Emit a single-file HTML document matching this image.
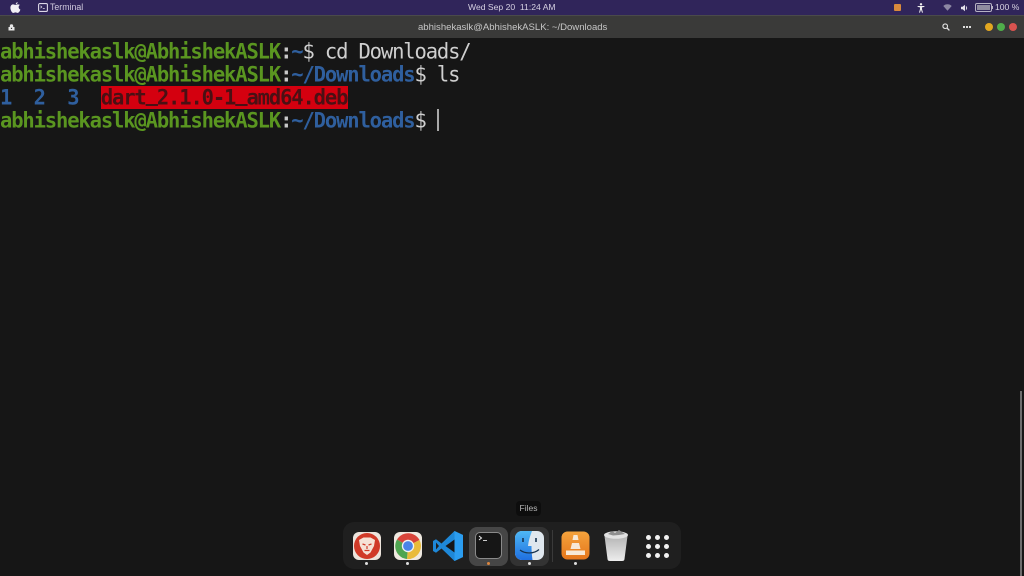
<!DOCTYPE html>
<html><head><meta charset="utf-8">
<style>
html,body{margin:0;padding:0;background:#161616;width:1024px;height:576px;overflow:hidden}
.a{position:absolute}
#top{left:0;top:0;width:1024px;height:15px;background:#30255a}
#bar{left:0;top:15px;width:1024px;height:23px;background:#3a3a39;border-top:1px solid #4a4a4a;box-sizing:border-box}
#term{left:0;top:38px;width:1024px;height:538px;background:#161616}
.t{font-family:"Liberation Sans",sans-serif;white-space:nowrap}
.l{position:absolute;left:0;font-family:"DejaVu Sans Mono",monospace;font-size:20.5px;letter-spacing:-1.14px;line-height:23px;height:23px;white-space:pre;color:#cfcfcf;transform-origin:0 50%;transform:scaleY(1.06);filter:blur(.35px)}
.g{color:#5a9620;font-weight:bold}
.b{color:#2f5f9e;font-weight:bold}
.w{color:#c9c9c9;font-weight:bold}
.u{display:inline-block;transform:translateY(-3px)}
</style></head>
<body>
<div class="a" id="top"></div>
<div class="a" id="bar"></div>
<div class="a" id="term"></div>

<svg class="a" style="left:9px;top:1px" width="13" height="13" viewBox="0 0 12 12"><path d="M8 1C7 1.200 6.200 2 6.200 3 7.200 3 8 2.100 8 1zM6 3.600C5.200 3.600 4.700 3.100 3.800 3.100 2.500 3.100 1.300 4.300 1.300 6.300c0 2.200 1.500 4.700 2.700 4.700.8 0 1.100-.5 2-.5s1.200.5 2 .5c1 0 2-1.500 2.500-3-1.200-.5-1.600-1.500-1.600-2.300 0-1 .5-1.600 1.300-2.100C9.600 3.400 8.700 3.100 8 3.100 7.200 3.100 6.600 3.600 6 3.600z" fill="#f2f0f5"/></svg>
<svg class="a" style="left:38px;top:3px" width="10" height="9" viewBox="0 0 10 9"><rect x=".6" y=".6" width="8.800" height="7.800" rx="1.200" fill="none" stroke="#dcd8e6" stroke-width="1.100"/><path d="M2.500 2.800l1.300 1.200-1.300 1.200M4.800 5.500h2" stroke="#dcd8e6" stroke-width=".8" fill="none"/></svg>
<div class="a t" style="left:50px;top:2px;font-size:8.800px;line-height:11px;color:#cfc9dc">Terminal</div>
<div class="a t" style="left:468px;top:2px;font-size:8.600px;line-height:11px;color:#d6d1e2">Wed Sep 20&nbsp; 11:24 AM</div>

<div class="a" style="left:894px;top:4px;width:7px;height:7px;background:#d98a3c;border-radius:1px"></div>
<svg class="a" style="left:917px;top:3px" width="8" height="10" viewBox="0 0 8 10"><circle cx="4" cy="1.300" r="1.200" fill="#eee"/><path d="M.6 3h6.800v.9L5 4.400V6l1 3.600H5L4 6.800 3 9.600H2L3 6V4.400L.6 3.900z" fill="#eee"/></svg>
<svg class="a" style="left:943px;top:4px" width="9" height="7" viewBox="0 0 9 7"><path d="M.3 2a6 6 0 0 1 8.400 0L4.500 6.800z" fill="#8d88a3"/></svg>
<svg class="a" style="left:961px;top:4px" width="8" height="8" viewBox="0 0 8 8"><path d="M0 2.800h1.600L4 .8v6.400L1.600 5.200H0z" fill="#e6e3ec"/><path d="M5 2.500a2 2 0 0 1 0 3" stroke="#e6e3ec" stroke-width=".9" fill="none"/></svg>
<div class="a" style="left:975px;top:3px;width:15px;height:7px;border:1px solid #b6b2c4;border-radius:2px;padding:0"><div style="margin:1px;height:5px;background:#8f8ba0"></div></div>
<div class="a" style="left:992px;top:6px;width:1px;height:3px;background:#b6b2c4"></div>
<div class="a t" style="left:995px;top:2px;font-size:8.600px;line-height:11px;color:#d8d4e2">100 %</div>

<svg class="a" style="left:8px;top:24px" width="7" height="7" viewBox="0 0 7 7"><path d="M1.800 3V2a1.700 1.700 0 0 1 3.400 0v1H6.500V6.500H.5V3z" fill="#e8e8e8"/><rect x="2.900" y="3.800" width="1.200" height="1.200" fill="#3a3a39"/></svg>
<div class="a t" style="left:418px;top:21px;font-size:9.550px;line-height:13px;color:#c6c6c6">abhishekaslk@AbhishekASLK: ~/Downloads</div>
<svg class="a" style="left:942px;top:23px" width="8" height="8" viewBox="0 0 8 8"><circle cx="3.200" cy="3.200" r="2.300" fill="none" stroke="#e0e0e0" stroke-width="1.100"/><path d="M5 5l2.400 2.400" stroke="#e0e0e0" stroke-width="1.300"/></svg>
<div class="a" style="left:963px;top:26px;width:2px;height:2px;background:#ddd;box-shadow:3px 0 #ddd,6px 0 #ddd"></div>
<div class="a" style="left:985px;top:23px;width:8px;height:8px;border-radius:50%;background:#e2a720"></div>
<div class="a" style="left:997px;top:23px;width:8px;height:8px;border-radius:50%;background:#4fae4a"></div>
<div class="a" style="left:1009px;top:23px;width:8px;height:8px;border-radius:50%;background:#d9534f"></div>

<div class="l" style="top:40px"><span class="g">abhishekaslk@AbhishekASLK</span><span class="w">:</span><span class="b">~</span>$ cd Downloads/</div>
<div class="l" style="top:63px"><span class="g">abhishekaslk@AbhishekASLK</span><span class="w">:</span><span class="b">~/Downloads</span>$ ls</div>
<div class="a" style="left:101px;top:86px;width:247px;height:23px;background:#d4000f"></div>
<div class="l" style="top:86px"><span class="b">1</span>  <span class="b">2</span>  <span class="b">3</span>  <span style="color:#4a1014;font-weight:bold">dart<span class="u">_</span>2.1.0-1<span class="u">_</span>amd64.deb</span></div>
<div class="l" style="top:109px"><span class="g">abhishekaslk@AbhishekASLK</span><span class="w">:</span><span class="b">~/Downloads</span>$ </div>
<div class="a" style="left:437px;top:109px;width:2px;height:22px;background:#a8a8a8"></div>

<div class="a" style="left:1020px;top:391px;width:2px;height:185px;background:#6e6e6e"></div>

<div class="a t" style="left:516px;top:501px;width:25px;height:15px;background:#0d0d0d;border-radius:4px;font-size:8.500px;line-height:15px;text-align:center;color:#b5b5b5">Files</div>

<div class="a" style="left:343px;top:522px;width:338px;height:47px;background:#1f1f1f;border-radius:11px"></div>
<div class="a" style="left:469px;top:527px;width:39px;height:39px;background:#464646;border-radius:8px"></div>
<div class="a" style="left:510px;top:527px;width:39px;height:39px;background:#333;border-radius:8px"></div>
<div class="a" style="left:552px;top:530px;width:1px;height:32px;background:#3a3a3a"></div>

<svg class="a" style="left:351px;top:530px" width="32" height="32" viewBox="0 0 32 32">
<rect x="2" y="2" width="28" height="28" rx="6" fill="#ece4dc"/>
<circle cx="16" cy="16" r="13" fill="#d03a28"/>
<path d="M8 10l4.500-2.500h7L24 10l-1 6-3.500 6.500L16 25l-3.500-2.500L9 16z" fill="#f5e2d6"/>
<path d="M11.500 14l3 1M20.500 14l-3 1M16 16v3M13.500 20.500h5" stroke="#d03a28" stroke-width="1.200" fill="none"/>
</svg>
<svg class="a" style="left:392px;top:530px" width="32" height="32" viewBox="0 0 32 32">
<rect x="2" y="2" width="28" height="28" rx="6" fill="#efe9e0"/>
<path d="M16 16L5 9.500A13 13 0 0 1 27.500 10z" fill="#d8443a"/>
<path d="M16 16L27.500 10A13 13 0 0 1 15 29z" fill="#e9bb3a"/>
<path d="M16 16L15 29A13 13 0 0 1 5 9.500z" fill="#4fa550"/>
<circle cx="16" cy="16" r="6.200" fill="#f2f2f2"/>
<circle cx="16" cy="16" r="4.900" fill="#4a84e8"/>
</svg>
<svg class="a" style="left:432px;top:530px" width="32" height="32" viewBox="0 0 32 32">
<path d="M22.500 1L9.500 13.500 4 9.300 1 11v10l3 1.700 5.500-4.200L22.500 31 31 27V5z" fill="#1e88d8"/>
<path d="M22.500 1L31 5v22l-8.500 4z" fill="#2b9df0"/>
<path d="M22.500 9.500L13.500 16l9 6.500z" fill="#161616"/>
<path d="M4 12.500L7 16l-3 3.500z" fill="#1f1f1f"/>
</svg>
<div class="a" style="left:475px;top:532px;width:25px;height:25px;background:#161616;border:1.500px solid #8a8a8a;border-radius:5px;box-sizing:content-box"></div>
<svg class="a" style="left:478px;top:535px" width="14" height="8" viewBox="0 0 14 8"><path d="M1 1l2.500 2L1 5" stroke="#eee" stroke-width="1" fill="none"/><path d="M5 5.500h4" stroke="#ccc" stroke-width="1"/></svg>
<svg class="a" style="left:514px;top:530px" width="31" height="31" viewBox="0 0 31 31">
<defs><linearGradient id="f" x1="0" y1="0" x2="0" y2="1"><stop offset="0" stop-color="#4fb8f5"/><stop offset="1" stop-color="#1f6fe0"/></linearGradient></defs>
<rect x="1" y="1" width="29" height="29" rx="7" fill="#dfe7ee"/>
<path d="M8 1h10c-2 5-3.500 10-4 15h3.500c0 4 .3 9 1 14H8a7 7 0 0 1-7-7V8a7 7 0 0 1 7-7z" fill="url(#f)"/>
<path d="M9 8v4M22 8v4" stroke="#16324f" stroke-width="1.600"/>
<path d="M6 20c5 4 14 4 19-.5" stroke="#16324f" stroke-width="1.200" fill="none"/>
</svg>
<svg class="a" style="left:560px;top:530px" width="31" height="31" viewBox="0 0 31 31">
<defs><linearGradient id="o" x1="0" y1="0" x2="0" y2="1"><stop offset="0" stop-color="#f5a33c"/><stop offset="1" stop-color="#e5761c"/></linearGradient></defs>
<rect x="1.500" y="1.500" width="28" height="28" rx="6" fill="url(#o)"/>
<path d="M13.500 5h4l1 5h-6zM12 13h7l1.500 6h-10z" fill="#f7e8d6"/>
<path d="M6 20.500h19v4.500H6z" fill="#f7e8d6"/>
</svg>
<svg class="a" style="left:602px;top:529px" width="28" height="33" viewBox="0 0 28 33">
<defs><linearGradient id="c" x1="0" y1="0" x2="0" y2="1"><stop offset="0" stop-color="#b5b5b5"/><stop offset="1" stop-color="#ededed"/></linearGradient></defs>
<path d="M2.500 7h23l-3 23c-.2 1.500-1 2-2.500 2H8c-1.500 0-2.300-.5-2.500-2z" fill="url(#c)"/>
<ellipse cx="14" cy="6" rx="12" ry="3.800" fill="#e2e2e2"/>
<path d="M6 5l4-3 3 2 4-3 3 2 3 2-6 1-6 .5z" fill="#8f8f8f"/>
</svg>
<div class="a" style="left:646px;top:535px;width:5px;height:5px;border-radius:50%;background:#f2f2f2;box-shadow:9px 0 #f2f2f2,18px 0 #f2f2f2,0 9px #f2f2f2,9px 9px #f2f2f2,18px 9px #f2f2f2,0 18px #f2f2f2,9px 18px #f2f2f2,18px 18px #f2f2f2"></div>

<div class="a" style="left:365px;top:562px;width:3px;height:3px;border-radius:50%;background:#ddd"></div>
<div class="a" style="left:406px;top:562px;width:3px;height:3px;border-radius:50%;background:#ddd"></div>
<div class="a" style="left:487px;top:562px;width:3px;height:3px;border-radius:50%;background:#d9853f"></div>
<div class="a" style="left:528px;top:562px;width:3px;height:3px;border-radius:50%;background:#ddd"></div>
<div class="a" style="left:574px;top:562px;width:3px;height:3px;border-radius:50%;background:#ddd"></div>
</body></html>
